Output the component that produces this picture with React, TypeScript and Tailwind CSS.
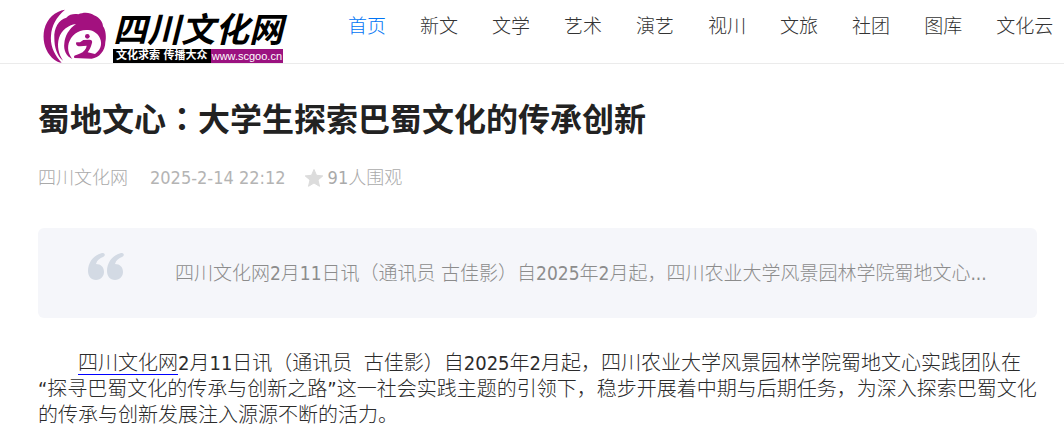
const NAV_LINKS = [
  { name: "首页", href: "/" },
  { name: "新文", href: "/xinwen" },
  { name: "文学", href: "/wenxue" },
  { name: "艺术", href: "/yishu" },
  { name: "演艺", href: "/yanyi" },
  { name: "视川", href: "/shichuan" },
  { name: "文旅", href: "/wenlv" },
  { name: "社团", href: "/shetuan" },
  { name: "图库", href: "/tuku" },
  { name: "文化云", href: "/wenhuayun" },
];

function Emblem() {
  return (
    <svg viewBox="22 16 192 162" className="w-16 h-[54px]" fill="#a3117f" aria-hidden="true">
      <path d="M88 18C58 22 34 45 26 77C18 113 31 150 56 168C64 174 71 176 78 177C56 154 43 126 46 96C48 66 62 40 88 18Z" />
      <path d="M56 104C54 72 70 48 92 42C101 31 118 29 128 32C146 24 165 27 175 35C194 42 202 58 202 68C211 79 212 104 209 115C209 141 190 163 168 165L116 163C113 157 117 154 124 153C137 150 147 143 151 134L153 126L134 128C124 129 119 122 122 116L133 116L143 109L160 108C168 108 172 112 168 121C166 130 161 139 156 146L178 151C193 141 199 125 195 110C190 91 174 80 157 79C130 76 106 94 99 119C94 139 101 155 110 166C92 159 83 139 86 119C88 97 99 76 121 61C97 64 77 81 70 103C63 127 69 151 82 171C64 157 56 131 56 104Z" />
      <circle cx="155" cy="98" r="7" />
    </svg>
  );
}

function Logo() {
  return (
    <a href="/" className="flex shrink-0 items-end gap-1.5 pt-[9px] pl-[43px]">
      <Emblem />
      <span className="flex flex-col">
        <span className="text-[34px] leading-[38px] font-bold italic text-black">
          四川文化网
        </span>
        <span className="flex h-[14px] text-[11px] leading-[14px] font-bold text-white">
          <span className="flex-1 bg-black text-center whitespace-nowrap">文化求索 传播大众</span>
          <span className="bg-[#9b1280] px-px font-['Liberation_Sans',sans-serif] font-normal">
            www.scgoo.cn
          </span>
        </span>
      </span>
    </a>
  );
}

function Star() {
  return (
    <svg viewBox="0 0 20 20" className="size-5" fill="#dcdcdc" aria-hidden="true">
      <path
        d="M10 1.5L12.5 7.3L18.8 7.9L14 12L15.5 18.3L10 15L4.5 18.3L6 12L1.2 7.9L7.5 7.3Z"
        stroke="#dcdcdc"
        strokeLinejoin="round"
      />
    </svg>
  );
}

function QuoteMark() {
  return (
    <svg viewBox="0 0 36 27" className="w-9 h-[27px] shrink-0" fill="#d3dae4" aria-hidden="true">
      <path d="M14 0C6 2 0 9 0 18C0 23 3 27 8 27C13 27 16 23 16 19C16 14 13 11 8 11C9 7 12 5 15 4C18 2 17 0 14 0Z" />
      <path d="M33 0C25 2 19 9 19 18C19 23 22 27 27 27C32 27 35 23 35 19C35 14 32 11 27 11C28 7 31 5 34 4C37 2 36 0 33 0Z" />
    </svg>
  );
}

export default function App() {
  return (
    <div
      className="overflow-x-hidden bg-white font-['DejaVu_Sans_Condensed','Noto_Sans','Noto_Sans_CJK_SC',sans-serif]"
      lang="zh-CN"
    >
      <header className="flex h-16 items-start border-b border-[#ebebeb]">
        <Logo />
        <nav className="ml-[65px] flex gap-[34px] pt-3 text-[19px] leading-7 font-light whitespace-nowrap">
          {NAV_LINKS.map((link, index) => (
            <a
              key={link.name}
              href={link.href}
              className={index === 0 ? "text-[#0074f5]" : "text-[#333]"}
            >
              {link.name}
            </a>
          ))}
        </nav>
      </header>

      <main className="pt-[29px] pr-[27px] pb-2 pl-[38px]">
        <h1 className="text-[32px] leading-12 font-bold text-[#222]">
          蜀地文心
          <span lang="zh-TW" className="font-['Noto_Sans_CJK_TC',sans-serif]">
            ：
          </span>
          大学生探索巴蜀文化的传承创新
        </h1>

        <div className="mt-5 flex items-center text-[18px] leading-7 font-light text-[#aaa]">
          <span>四川文化网</span>
          <time className="ml-[22px] text-[#b4b4b4]">2025-2-14 22:12</time>
          <span className="ml-[18px] flex items-center gap-1">
            <Star />
            91人围观
          </span>
        </div>

        <blockquote className="mt-9 flex h-[90px] items-center rounded-md bg-[#f5f6fa] pl-[50px]">
          <div className="-mt-3.5">
            <QuoteMark />
          </div>
          <p className="ml-[51px] text-[19px] leading-7 font-light whitespace-nowrap text-[#8c8c8c]">
            四川文化网2月11日讯（通讯员 古佳影）自2025年2月起，四川农业大学风景园林学院蜀地文心...
          </p>
        </blockquote>

        <p className="mt-8 indent-10 text-[20px] leading-[26px] font-light text-[#2b2b2b]">
          <a
            href="/"
            className="underline decoration-[#00f] decoration-1 underline-offset-4 [text-decoration-skip-ink:none]"
          >
            四川文化网
          </a>
          2月11日讯（通讯员&nbsp; 古佳影）自2025年2月起，四川农业大学风景园林学院蜀地文心实践团队在“探寻巴蜀文化的传承与创新之路”这一社会实践主题的引领下，稳步开展着中期与后期任务，为深入探索巴蜀文化的传承与创新发展注入源源不断的活力。
        </p>
      </main>
    </div>
  );
}
